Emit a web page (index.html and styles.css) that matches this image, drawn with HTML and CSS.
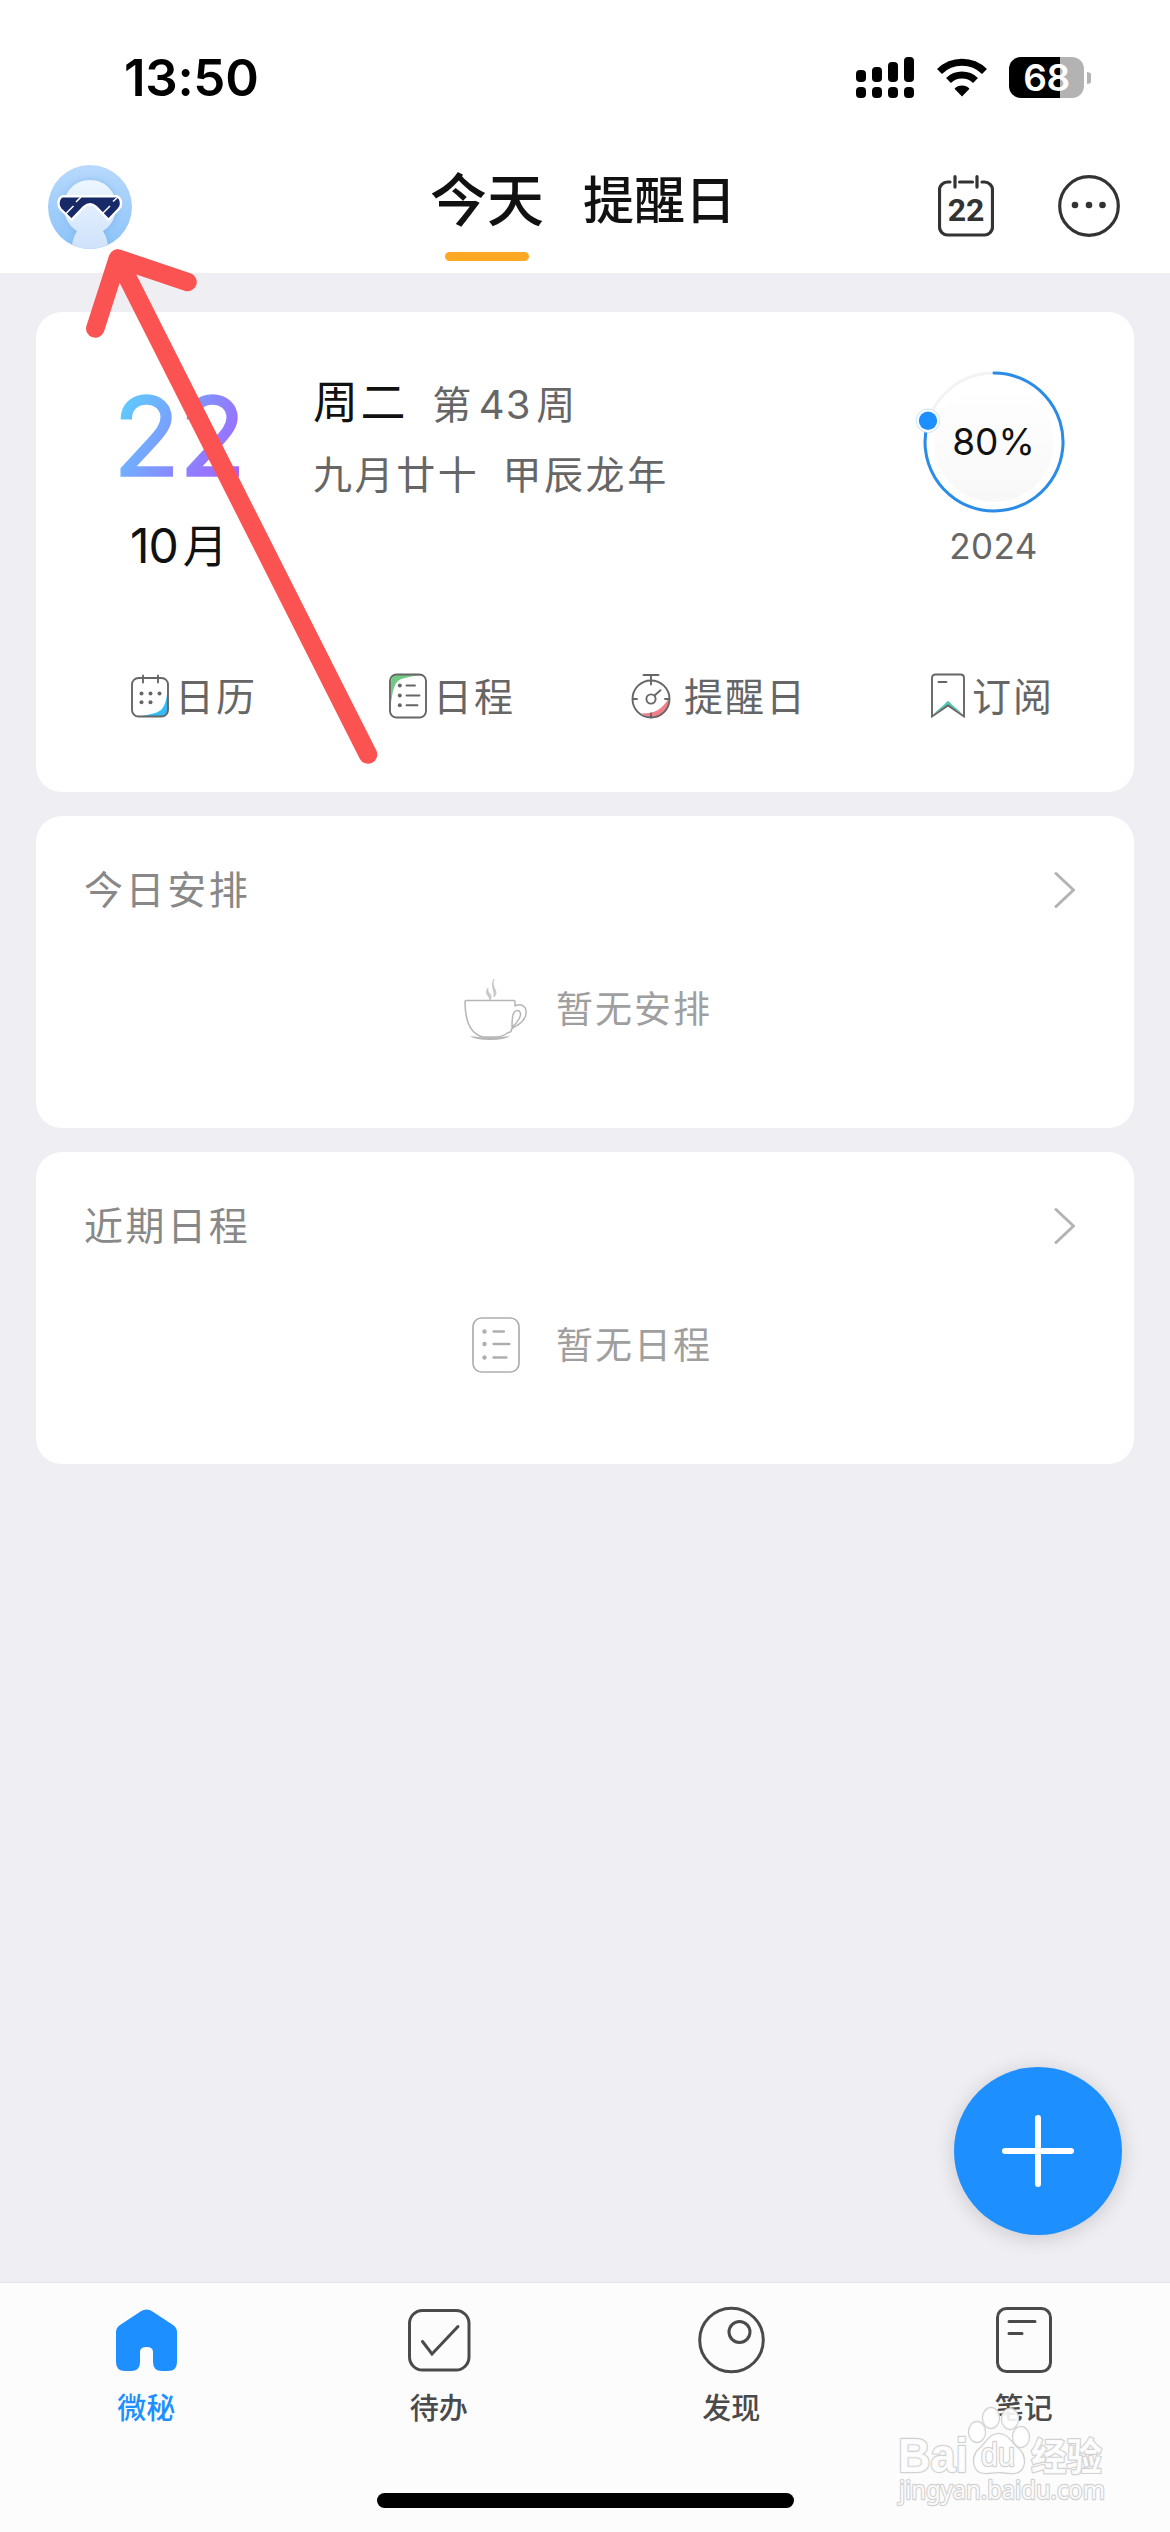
FILE: index.html
```html
<!DOCTYPE html>
<html lang="zh-CN">
<head>
<meta charset="utf-8">
<title>微秘</title>
<link rel="stylesheet" href="styles.css">
</head>
<body>
<div class="app">
  <div class="status-bar">
    <span class="clock">13:50</span>
    <div class="status-icons">
      <svg width="58" height="42" viewBox="0 0 58 42">
        <rect x="0" y="13" width="10" height="12" rx="4"/><rect x="16" y="10" width="10" height="15" rx="4"/><rect x="32" y="5" width="10" height="20" rx="4"/><rect x="48" y="0" width="10" height="25" rx="4"/>
        <rect x="0" y="30" width="10" height="11" rx="4"/><rect x="16" y="30" width="10" height="11" rx="4"/><rect x="32" y="30" width="10" height="11" rx="4"/><rect x="48" y="30" width="10" height="11" rx="4"/>
      </svg>
      <svg class="wifi" width="50" height="42" viewBox="0 0 50 42" fill="none" stroke="#000" stroke-width="7">
        <path d="M2.5 14.5a32 32 0 0 1 45 0"/><path d="M11.5 23.5a19.500 19.500 0 0 1 27 0"/><path d="M25 39.500l-7.500-7.800a10.500 10.500 0 0 1 15 0z" fill="#000" stroke="none"/>
      </svg>
      <div class="battery"><span class="battery-level">68</span></div>
      <svg class="battery-tip" width="4" height="12" viewBox="0 0 4 12"><path d="M0 0a6 6 0 0 1 0 12z" fill="#b3b3b3"/></svg>
    </div>
  </div>

  <header class="header">
    <svg class="avatar" width="84" height="84" viewBox="0 0 84 84">
      <defs>
        <linearGradient id="sky" x1="0" y1="0" x2="0" y2="1"><stop offset="0" stop-color="#b8d9fc"/><stop offset="1" stop-color="#8bc3f9"/></linearGradient>
        <linearGradient id="face" x1="0" y1="0" x2="0" y2="1"><stop offset="0" stop-color="#ecf6fe"/><stop offset="1" stop-color="#cfe2fb"/></linearGradient>
        <clipPath id="disc"><circle cx="42" cy="42" r="42"/></clipPath>
        <filter id="soft" x="-30%" y="-30%" width="160%" height="160%"><feGaussianBlur stdDeviation="3"/></filter>
      </defs>
      <g clip-path="url(#disc)">
        <rect width="84" height="84" fill="url(#sky)"/>
        <path d="M42 15c15 0 26 11 26 26 0 12-5 20-13 25 3 5 5 10 5 18H24c0-8 2-13 5-18-8-5-13-13-13-25 0-15 11-26 26-26z" fill="#6ba3dd" opacity=".5" filter="url(#soft)"/>
        <path d="M42 15c15 0 26 11 26 26 0 12-5 20-13 25 3 5 5 10 5 18H24c0-8 2-13 5-18-8-5-13-13-13-25 0-15 11-26 26-26z" fill="url(#face)"/>
      </g>
      <path d="M15 31.200H68.500q4.500 1.500 4.500 7.500 0 3-2 5L60.500 54.800 48 41.800q-6-5-12 0L23.500 54.800 12.500 44q-2-2.500-2-5.300 0-6 4.500-7.500z" fill="#182967" stroke="#fff" stroke-width="2.400" stroke-linejoin="round"/>
      <path d="M28 37l5-5M65 36.500l5-4.500M17.500 49l8-8M54 49l8-8" stroke="#fff" stroke-width="1.500"/>
    </svg>
    <nav class="tabs">
      <div class="tab tab-active">今天<span class="tab-line"></span></div>
      <div class="tab">提醒日</div>
    </nav>
    <div class="header-actions">
      <div class="today-button">
        <svg width="56" height="62" viewBox="0 0 56 62" fill="none" stroke="#333" stroke-width="3.200" stroke-linecap="round">
          <path d="M12 7H9.500a8 8 0 0 0-8 8v37a8 8 0 0 0 8 8h37a8 8 0 0 0 8-8V15a8 8 0 0 0-8-8H44M21.500 7h13M17 1.600v10.500M39 1.600v10.500"/>
        </svg>
        <span class="today-number">22</span>
      </div>
      <svg width="62" height="62" viewBox="0 0 62 62"><circle cx="31" cy="31" r="29.300" fill="none" stroke="#333" stroke-width="3.200"/><g fill="#333"><circle cx="17" cy="30" r="3.300"/><circle cx="31" cy="30" r="3.300"/><circle cx="44.500" cy="30" r="3.300"/></g></svg>
    </div>
  </header>

  <main class="content">
    <section class="card date-card">
      <div class="date-row">
        <div class="day-block">
          <div class="day">22</div>
          <div class="month"><span class="month-number">10</span>月</div>
        </div>
        <div class="week-block">
          <div class="week-line"><span class="weekday">周二</span><span class="week-index">第<span class="num">43</span>周</span></div>
          <div class="lunar"><span>九月廿十</span><span>甲辰龙年</span></div>
        </div>
        <div class="year-block">
          <div class="ring">
            <svg width="160" height="150" viewBox="0 0 160 150" fill="none">
              <defs><linearGradient id="disc-fill" x1="0" y1="0" x2="0" y2="1"><stop offset="0" stop-color="#fff"/><stop offset="1" stop-color="#f8f8f8"/></linearGradient></defs>
              <circle cx="80" cy="75" r="60" fill="url(#disc-fill)"/>
              <circle cx="80" cy="75" r="69" stroke="#f3f3f3" stroke-width="3"/>
              <path d="M80 6a69 69 0 1 1-66 49" stroke="#2b8ce8" stroke-width="3" stroke-linecap="round"/>
              <circle cx="14" cy="53.700" r="11.800" fill="#fff" stroke="#b9dcfb" stroke-width=".8"/>
              <circle cx="14" cy="53.700" r="9.200" fill="#1e8fff"/>
            </svg>
            <span class="percent">80%</span>
          </div>
          <div class="year">2024</div>
        </div>
      </div>
      <div class="shortcuts">
        <div class="shortcut">
          <svg width="38" height="46" viewBox="0 0 38 46" fill="none" stroke="#666" stroke-width="1.900" stroke-linecap="round">
            <path d="M36.500 17C35.500 29 33 34 30 37 25 41 17 41.500 9 43.500H31q5-1 5.500-6z" fill="#33bdf5" stroke="none"/>
            <rect x="1" y="5" width="36" height="38.500" rx="6.500"/><path d="M12 2.500v7M27 2.500v7"/>
            <g fill="#666" stroke="none"><circle cx="10.500" cy="20.500" r="2"/><circle cx="19.500" cy="20.500" r="2"/><circle cx="28.500" cy="20.500" r="2"/><circle cx="10.500" cy="29.300" r="2"/><circle cx="19.500" cy="29.300" r="2"/></g>
          </svg><span>日历</span>
        </div>
        <div class="shortcut">
          <svg width="38" height="46" viewBox="0 0 38 46" fill="none" stroke="#666" stroke-width="1.900" stroke-linecap="round">
            <path d="M2 30V9q0-7 7-7h24C19 4 12 5 8.500 8.500 4.500 13 3.500 20 2 30z" fill="#72c984" stroke="none"/>
            <rect x="1" y="1.500" width="36" height="43" rx="6.500"/><path d="M17.500 12.500h8.500M17.500 22.500h13M17.500 32.300h11"/>
            <g fill="#666" stroke="none"><circle cx="10.800" cy="12.500" r="2"/><circle cx="10.800" cy="22.500" r="2"/><circle cx="10.800" cy="32.300" r="2"/></g>
          </svg><span>日程</span>
        </div>
        <div class="shortcut">
          <svg width="40" height="46" viewBox="0 0 40 46" fill="none" stroke="#666" stroke-width="1.900" stroke-linecap="round">
            <path d="M10 40.500c14 0 21-4 27.500-15q1 9-5 15t-12.500 4-10-4z" fill="#f2808a" stroke="none"/>
            <circle cx="20" cy="26" r="18.500"/><circle cx="20" cy="26" r="4.600"/><path d="M23.500 22.500l6-5.300M12.500 2h15M20 2v9.500M2 26h4M34 26h4M20 40.500v4"/>
          </svg><span>提醒日</span>
        </div>
        <div class="shortcut">
          <svg width="36" height="46" viewBox="0 0 36 46" fill="none" stroke="#666" stroke-width="1.900">
            <path d="M3 41C9 36 13 33 17 28.500q1-1 2 0C23 33 27 36 33 41L18 32z" fill="#50c9b3" stroke="none"/>
            <path d="M2 43.500V5q0-3.500 3.500-3.500h25Q34 1.500 34 5v38.500L18 32.500z"/><path d="M8.500 9h8" stroke-linecap="round"/>
          </svg><span>订阅</span>
        </div>
      </div>
    </section>

    <section class="card list-card">
      <div class="card-head"><h2>今日安排</h2>
        <svg width="22" height="38" viewBox="0 0 22 38" fill="none" stroke="#b3b3b3" stroke-width="3" stroke-linecap="round" stroke-linejoin="round"><path d="M2 2.500L19.500 19 2 35.500"/></svg>
      </div>
      <div class="empty">
        <svg class="cup" width="64" height="64" viewBox="0 0 64 64" fill="none" stroke="#b5b5b5" stroke-width="1.500" stroke-linejoin="round">
          <path d="M1 24.500Q1 23.500 2 23.500H50Q51 23.500 51 24.500v4.500c6-3 12 0 11 8-1 6-5 9-9 11.500-3 2-6 2-6 6-1 1-1 1-3 1C41 58 36 60 32 60h-13C7 57 1 45 1 24.500z"/>
          <path d="M48 50c0-14 2-16 5-16.500s5 3 2 8.500-7 8-7 8z"/>
          <path d="M6 59q20 3 40 0-5 4-20 4T6 59z" fill="#b5b5b5" stroke="none"/>
          <path d="M30 2c-4 8 6 12 0 18 1-8-4-9 0-18zM24 11c-2 5 6 6 2 12-1-5-6-6-2-12z" fill="#c8c8c8" stroke="#c8c8c8" stroke-width="1"/>
        </svg><span>暂无安排</span>
      </div>
    </section>

    <section class="card list-card">
      <div class="card-head"><h2>近期日程</h2>
        <svg width="22" height="38" viewBox="0 0 22 38" fill="none" stroke="#b3b3b3" stroke-width="3" stroke-linecap="round" stroke-linejoin="round"><path d="M2 2.500L19.500 19 2 35.500"/></svg>
      </div>
      <div class="empty">
        <svg class="sheet" width="48" height="56" viewBox="0 0 48 56" fill="none" stroke="#aeaeae" stroke-width="1.700" stroke-linecap="round">
          <rect x="1" y="1" width="46" height="54" rx="8.500"/><path d="M21.500 14.500h10.500M21.500 27h16M21.500 40.500h13" stroke-width="2.300"/>
          <g fill="#aeaeae" stroke="none"><circle cx="12.500" cy="14.500" r="2.200"/><circle cx="12.500" cy="27" r="2.200"/><circle cx="12.500" cy="40.500" r="2.200"/></g>
        </svg><span>暂无日程</span>
      </div>
    </section>
  </main>

  <footer class="tab-bar">
    <div class="tab-items">
      <div class="tab-item selected">
        <svg width="70" height="70" viewBox="0 0 70 70"><path d="M29.500 6.500q6-4 12 0L62 20q4 3 4 7v30q0 9-9 9h-6q-9 0-9-9V47q0-5-6.500-5T29 47v10q0 9-9 9h-6q-9 0-9-9V27q0-4 4-7z" fill="#1e8fff"/></svg>
        <span>微秘</span>
      </div>
      <div class="tab-item">
        <svg width="70" height="70" viewBox="0 0 70 70" fill="none" stroke="#4a4a4a" stroke-width="3"><rect x="5.500" y="5.500" width="59.500" height="59.500" rx="13"/><path d="M18.500 36.500l9.500 12.500L54 21.500" stroke-linecap="round"/></svg>
        <span>待办</span>
      </div>
      <div class="tab-item">
        <svg width="70" height="70" viewBox="0 0 70 70" fill="none" stroke="#4a4a4a" stroke-width="3"><circle cx="35.500" cy="35" r="31.800"/><circle cx="43.500" cy="27" r="10.500"/></svg>
        <span>发现</span>
      </div>
      <div class="tab-item">
        <svg width="70" height="70" viewBox="0 0 70 70" fill="none" stroke="#4a4a4a" stroke-width="3"><rect x="8.500" y="3.500" width="53" height="63" rx="9"/><path d="M20 16.500h26M20 28.500h13" stroke-linecap="round"/></svg>
        <span>笔记</span>
      </div>
    </div>
    <div class="home-indicator"></div>
  </footer>

  <div class="add-button"><svg width="72" height="72" viewBox="0 0 72 72" stroke="#fff" stroke-width="6" stroke-linecap="round"><path d="M3 36h66M36 3v66"/></svg></div>

  <svg class="arrow" width="330" height="540" viewBox="60 240 330 540" fill="none" stroke="#fa5352" stroke-linecap="round" stroke-linejoin="round"><path d="M95.300 328.500L117.800 258.500 187.500 282M117.800 258.500L368 754.500" stroke-width="18.500"/></svg>

  <svg class="watermark" width="230" height="124" viewBox="0 0 230 124">
    <g fill="#fff" fill-opacity=".9" stroke="#d2d2d2" stroke-width="2.400" stroke-linejoin="round" paint-order="stroke">
      <text class="wm-name" x="8" y="76" textLength="70" lengthAdjust="spacingAndGlyphs">Bai</text>
      <text class="wm-cn" x="141" y="74" textLength="71" lengthAdjust="spacingAndGlyphs">经验</text>
      <ellipse cx="87" cy="36" rx="8" ry="10"/><ellipse cx="101" cy="22" rx="8" ry="10"/><ellipse cx="120" cy="23" rx="8" ry="10"/><ellipse cx="131" cy="41" rx="8" ry="10"/>
      <path d="M108.500 38c10 0 13 10 20 15 8 7 8 24-6 24-6 0-9-1-14-1s-8 1-13 1c-14 0-14-17-6-24 7-5 9-15 19-15z"/>
      <text class="wm-du" x="91" y="70" textLength="34" lengthAdjust="spacingAndGlyphs">du</text>
      <text class="wm-url" x="9" y="103" textLength="206" lengthAdjust="spacingAndGlyphs">jingyan.baidu.com</text>
    </g>
  </svg>
</div>
</body>
</html>
```
FILE: styles.css
```css
* { box-sizing: border-box; margin: 0; padding: 0; }
body { width: 1170px; height: 2532px; overflow: hidden; background: #efeef3; color: #111; font-family: "Noto Sans CJK SC", sans-serif; }
svg { display: block; flex: none; }
.app { position: relative; display: flex; flex-direction: column; width: 1170px; height: 2532px; }

.status-bar { display: flex; justify-content: space-between; height: 136px; padding: 57px 79px 0 124px; background: #fff; color: #000; }
.clock { font: 600 51px/42px Inter, sans-serif; letter-spacing: -0.3px; }
.status-icons { display: flex; align-items: flex-start; }
.wifi { margin-left: 23px; }
.battery { display: flex; align-items: center; justify-content: center; width: 75px; height: 41px; margin-left: 22px; border-radius: 12px; background: linear-gradient(90deg, #000 51px, #b3b3b3 51px); }
.battery-level { color: #fff; font: 600 37px/41px Inter, sans-serif; letter-spacing: -0.5px; }
.battery-tip { margin: 15px 0 0 3px; }

.header { display: grid; grid-template-columns: 1fr auto 1fr; height: 137px; padding: 0 52px 0 48px; background: #fff; }
.avatar { margin-top: 29px; }
.tabs { display: flex; gap: 39px; height: 125px; }
.tab { display: flex; flex-direction: column; align-items: center; font-size: 51px; font-weight: 500; line-height: 122px; }
.tab-active { font-size: 57px; line-height: 120px; }
.tab-line { width: 84px; height: 9px; margin-top: -4px; border-radius: 5px; background: #fba822; }
.header-actions { display: flex; justify-content: flex-end; gap: 64px; padding-top: 39px; margin-right: -2px; }
.today-button { display: grid; width: 56px; height: 62px; }
.today-button > * { grid-area: 1 / 1; }
.today-number { padding-top: 23px; text-align: center; color: #333; font: 700 32px/24px Roboto, sans-serif; }

.content { display: flex; flex: 1; flex-direction: column; gap: 24px; padding: 39px 36px 0; }
.card { border-radius: 26px; background: #fff; }
.date-card { display: flex; flex-direction: column; height: 480px; }
.date-row { display: flex; height: 356px; padding-top: 55px; }
.day-block { display: flex; flex-direction: column; width: 277px; padding-left: 77px; }
.day { align-self: flex-start; height: 136px; padding-top: 1px; font: 400 110px/136px Inter, sans-serif; letter-spacing: -1px; background: linear-gradient(120deg, #5ccfff 12%, #8a85ff 60%, #a561ff 90%); background-clip: text; -webkit-background-clip: text; color: transparent; -webkit-text-stroke: 1.6px transparent; }
.month { padding-left: 17px; margin-top: 11px; font-size: 45px; line-height: 60px; }
.month-number { margin-right: 5px; font-family: Inter, sans-serif; font-size: 48px; letter-spacing: -1px; }
.week-block { flex: 1; padding-top: 1px; color: #666; font-size: 39px; letter-spacing: 2.6px; }
.week-line { display: flex; align-items: baseline; gap: 24px; height: 68px; line-height: 64px; }
.weekday { color: #111; font-size: 45px; }
.num { margin: 0 5px; font-family: Inter, sans-serif; font-size: 40px; letter-spacing: 1px; }
.lunar { display: flex; gap: 23px; line-height: 72px; }
.year-block { display: flex; flex-direction: column; align-items: center; width: 281px; }
.ring { display: grid; place-items: center; height: 150px; }
.ring > * { grid-area: 1 / 1; }
.percent { font: 400 37px/44px Inter, sans-serif; }
.year { margin-top: 7px; color: #666; font: 400 35px/44px Inter, sans-serif; letter-spacing: .4px; }
.shortcuts { display: flex; color: #666; font-size: 39px; line-height: 60px; letter-spacing: 2px; }
.shortcut { display: flex; align-items: center; }
.shortcut span { margin-top: -4px; }
.shortcut:nth-child(1) { width: 258px; padding-left: 95px; gap: 6px; }
.shortcut:nth-child(2) { width: 243px; padding-left: 95px; gap: 6px; }
.shortcut:nth-child(3) { width: 298px; padding-left: 94px; gap: 13px; }
.shortcut:nth-child(4) { padding-left: 95px; gap: 6px; }

.list-card { height: 312px; padding: 43px 58px 0 48px; }
.card-head { display: flex; align-items: center; justify-content: space-between; height: 62px; color: #888; }
.card-head h2 { margin-top: -6px; font-size: 39px; font-weight: 400; line-height: 62px; letter-spacing: 2.600px; }
.empty { display: flex; align-items: center; height: 64px; margin-top: 56px; color: #9f9f9f; font-size: 37px; letter-spacing: 2px; line-height: 56px; }
.empty span { margin-top: -5px; }
.cup { margin: 0 28px 0 380px; }
.sheet { margin: 0 36px 0 388px; }

.tab-bar { display: flex; flex-direction: column; align-items: center; height: 250px; border-top: 1px solid #e5e5e9; background: #fcfcfc; }
.tab-items { display: grid; grid-template-columns: repeat(4, 1fr); width: 1170px; height: 210px; padding-top: 22px; }
.tab-item { display: flex; flex-direction: column; align-items: center; color: #4a4a4a; font-size: 29px; font-weight: 500; }
.tab-item span { margin-top: 9px; line-height: 44px; }
.tab-item.selected { color: #1e8fff; }
.home-indicator { width: 417px; height: 15px; border-radius: 8px; background: #000; }

.add-button { position: absolute; left: 954px; top: 2067px; display: grid; place-items: center; width: 168px; height: 168px; border-radius: 50%; background: #1e8fff; box-shadow: 0 3px 20px rgba(0, 0, 0, .16); }
.arrow { position: absolute; left: 60px; top: 240px; }
.watermark { position: absolute; left: 890px; top: 2396px; }
.wm-name { font: 700 48px "Liberation Sans", sans-serif; }
.wm-cn { font: 700 38px "Noto Sans CJK SC", sans-serif; }
.wm-du { font: 400 33px "Liberation Sans", sans-serif; }
.wm-url { font: 400 26px "Noto Sans", sans-serif; }
```
